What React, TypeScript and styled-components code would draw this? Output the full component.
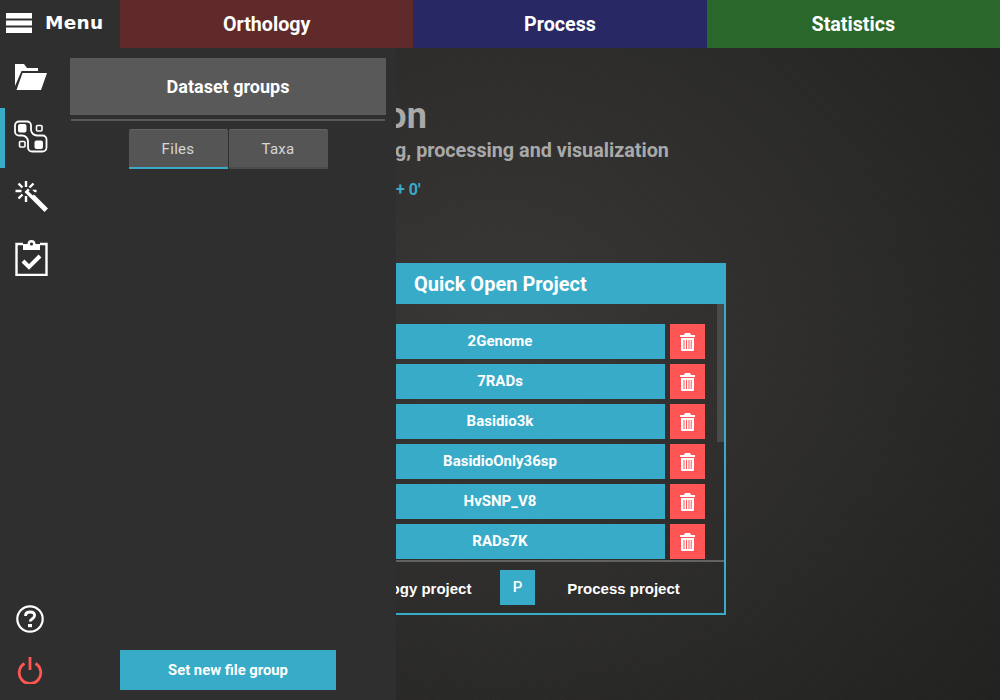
import React from "react";
import styled, { createGlobalStyle } from "styled-components";

const Global = createGlobalStyle`
  html, body { margin: 0; padding: 0; height: 100%; background: #262626; }
  #root { height: 100%; }
  * { box-sizing: border-box; }
`;

const Page = styled.div`
  width: 1000px;
  height: 700px;
  display: flex;
  flex-direction: column;
  overflow: hidden;
  font-family: Roboto, "Liberation Sans", sans-serif;
  color: #fff;
  background: #2f2f2f;
`;

const TopBar = styled.header`
  height: 48px;
  flex: none;
  display: flex;
`;

const MenuButton = styled.div`
  width: 120px;
  flex: none;
  display: flex;
  align-items: center;
  gap: 13px;
  padding: 0 0 3px 6px;
  font-family: "DejaVu Sans", sans-serif;
  font-weight: 700;
  font-size: 18.5px;
  letter-spacing: 0.3px;
`;

const TopTab = styled.div<{ $bg: string }>`
  flex: 1;
  display: flex;
  align-items: center;
  justify-content: center;
  padding: 1px 0 0 0;
  background: ${(p) => p.$bg};
  font-weight: 700;
  font-size: 19.7px;
`;

const Body = styled.div`
  flex: 1;
  display: flex;
  min-height: 0;
  position: relative;
`;

const Nav = styled.nav`
  width: 60px;
  flex: none;
  display: flex;
  flex-direction: column;
  background: #2f2f2f;
`;

const NavItem = styled.div<{ $active?: boolean; $lift?: number }>`
  height: 60px;
  display: flex;
  align-items: center;
  justify-content: center;
  padding: 0 0 ${(p) => p.$lift ?? 2}px 2px;
  box-shadow: ${(p) => (p.$active ? "inset 5px 0 0 #37abc8" : "none")};
`;

const NavSpacer = styled.div`
  flex: 1;
`;

const SmallNavItem = styled.div`
  height: 51px;
  display: flex;
  align-items: center;
  justify-content: center;
`;

const NavFoot = styled.div`
  padding-bottom: 5px;
`;

const Main = styled.main`
  flex: 1;
  min-width: 0;
  overflow: hidden;
  position: relative;
  padding: 50px 0 0 215px;
  background:
    repeating-linear-gradient(45deg, rgba(255, 255, 255, 0.012) 0 1px, transparent 1px 3px),
    radial-gradient(ellipse 640px 560px at 440px 280px, rgba(66, 64, 62, 0.72), rgba(60, 58, 57, 0) 100%),
    #212120;
`;

const Title = styled.h1`
  margin: 0;
  font-size: 36px;
  line-height: 36px;
  font-weight: 700;
  color: #a9a9a9;
  white-space: nowrap;
`;

const Subtitle = styled.p`
  margin: 4px 0 0 -246px;
  font-size: 19.75px;
  line-height: 26px;
  font-weight: 700;
  color: #a9a9a9;
  white-space: nowrap;
`;

const Version = styled.p`
  margin: 17px 0 0 35px;
  font-size: 16px;
  line-height: 18px;
  font-weight: 700;
  color: #37abc8;
  white-space: nowrap;
`;

const Card = styled.section`
  width: 451px;
  height: 352px;
  margin: 64px 0 0 0;
  border: 2px solid #37abc8;
  border-top: none;
  display: flex;
  flex-direction: column;
`;

const CardHeader = styled.div`
  height: 41px;
  flex: none;
  margin-right: -2px;
  background: #37abc8;
  display: flex;
  align-items: center;
  padding-left: 137px;
  font-size: 20px;
  font-weight: 700;
`;

const ListArea = styled.div`
  flex: 1;
  min-height: 0;
  overflow: hidden;
  position: relative;
  padding: 20px 0 0 58px;
  display: flex;
  flex-direction: column;
  gap: 5px;
`;

const ScrollThumb = styled.div`
  position: absolute;
  top: 0;
  right: 0;
  width: 7px;
  height: 138px;
  background: #4a4a4a;
`;

const ProjectRow = styled.div`
  display: flex;
  gap: 5px;
  flex: none;
`;

const ProjectButton = styled.div`
  width: 330px;
  height: 35px;
  padding-bottom: 1px;
  background: #37abc8;
  display: flex;
  align-items: center;
  justify-content: center;
  font-size: 15px;
  font-weight: 700;
`;

const TrashButton = styled.div`
  width: 35px;
  height: 35px;
  background: #ff5555;
  display: flex;
  align-items: center;
  justify-content: center;
`;

const CardFooter = styled.div`
  height: 53px;
  flex: none;
  border-top: 2px solid #626262;
  display: flex;
  align-items: center;
  padding-left: 8px;
`;

const SquareButton = styled.div`
  width: 35px;
  height: 35px;
  flex: none;
  background: #37abc8;
  display: flex;
  align-items: center;
  justify-content: center;
  padding-bottom: 1px;
  font-size: 15px;
  font-weight: 500;
`;

const FooterLabel = styled.div`
  width: 180px;
  flex: none;
  padding: 2px 3px 0 0;
  text-align: center;
  font-family: "Liberation Sans", sans-serif;
  font-size: 15px;
  font-weight: 700;
`;

const Panel = styled.aside`
  position: absolute;
  left: 60px;
  top: 0;
  bottom: 0;
  width: 336px;
  background: #2f2f2f;
  display: flex;
  flex-direction: column;
  padding: 10px;
`;

const PanelTitle = styled.div`
  height: 57px;
  flex: none;
  background: #595959;
  display: flex;
  align-items: center;
  justify-content: center;
  font-size: 18px;
  font-weight: 700;
`;

const Divider = styled.div`
  height: 2px;
  flex: none;
  margin: 4px 1px 0;
  background: #595959;
`;

const Tabs = styled.div`
  display: flex;
  justify-content: center;
  gap: 1px;
  margin: 8px 0 0 0;
  flex: none;
`;

const Tab = styled.div<{ $active?: boolean }>`
  width: 99px;
  height: 40px;
  display: flex;
  align-items: center;
  justify-content: center;
  padding-top: 1px;
  background: #555;
  border-top: 1px solid #626262;
  border-bottom: 2px solid ${(p) => (p.$active ? "#37abc8" : "#4b4b4b")};
  border-radius: 2px 2px 0 0;
  color: #d6d6d6;
  font-size: 15px;
  letter-spacing: 0.3px;
`;

const PanelSpacer = styled.div`
  flex: 1;
`;

const PanelAction = styled.div`
  width: 216px;
  height: 40px;
  flex: none;
  margin-left: 50px;
  background: #37abc8;
  display: flex;
  align-items: center;
  justify-content: center;
  font-size: 14.8px;
  font-weight: 700;
`;

const Hamburger = () => (
  <svg width="26" height="21" viewBox="0 0 26 21" fill="#fff">
    <rect x="0" y="1" width="26" height="5.5" />
    <rect x="0" y="8.5" width="26" height="5" />
    <rect x="0" y="15.5" width="26" height="5.5" />
  </svg>
);

const FolderIcon = () => (
  <svg width="34" height="28" viewBox="0 0 34 28" fill="#fff">
    <path d="M1 27V1h9l3 4h11v3H7.5L1 23z" />
    <path d="M8.5 10H33l-6 17H2.5z" />
  </svg>
);

const GroupsIcon = () => (
  <svg width="34" height="33" viewBox="0 0 34 33" fill="none" stroke="#fff">
    <path
      d="M5 1.5H13a4 4 0 0 1 4 4v4a6 6 0 0 0 6 6h5.5a4 4 0 0 1 4 4V27.5a4 4 0 0 1-4 4H18a4 4 0 0 1-4-4v-6a6 6 0 0 0-6-6H5a4 4 0 0 1-4-4V5.5a4 4 0 0 1 4-4z"
      strokeWidth="1.8"
    />
    <rect x="4" y="4" width="8.5" height="8.5" rx="2" fill="#fff" stroke="none" />
    <rect x="22.5" y="5.5" width="5.5" height="5.5" rx="1" strokeWidth="1.6" />
    <rect x="5.5" y="21.5" width="5.5" height="5.5" rx="1" strokeWidth="1.6" />
    <rect x="20.5" y="20.5" width="8.5" height="8.5" rx="2" fill="#fff" stroke="none" />
  </svg>
);

const WandIcon = () => (
  <svg width="34" height="34" viewBox="-1 0 34 34" fill="none" stroke="#fff" strokeWidth="2.4">
    <path d="M11 1v6M11 16v6M0.5 11h6M15.5 11h6M3.5 3.5l4 4M18.5 3.5l-4 4M3.5 18.5l4-4" />
    <path d="M13 8.5l20 20-3.5 3.5-20-20z" fill="#fff" stroke="none" />
    <path d="M13.6 11.4l2.6-2.6 4.2 4.2-2.6 2.6z" fill="#2f2f2f" stroke="none" />
  </svg>
);

const ChecklistIcon = () => (
  <svg width="33" height="37" viewBox="0 0 33 37" fill="none">
    <path d="M8 5H1.5v31h30V5H25" stroke="#fff" strokeWidth="2.4" />
    <path d="M8 11V5h4.5a4 4 0 0 1 8 0H25v6z" fill="#fff" />
    <circle cx="16.5" cy="5" r="1.6" fill="#2f2f2f" />
    <path d="M8 22l6 6 11-11" stroke="#fff" strokeWidth="4" />
  </svg>
);

const HelpIcon = () => (
  <svg width="28" height="28" viewBox="0 0 28 28" fill="none" stroke="#fff">
    <circle cx="14" cy="14" r="12.7" strokeWidth="2.2" />
    <path d="M9.5 11c0-2.6 2-4 4.6-4 2.7 0 4.5 1.4 4.5 3.6 0 3.2-4.4 3-4.4 6" strokeWidth="2.8" />
    <rect x="12" y="19" width="4" height="3.2" fill="#fff" stroke="none" />
  </svg>
);

const PowerIcon = () => (
  <svg width="26" height="28" viewBox="0 0 26 28" fill="none" stroke="#ff5555" strokeWidth="2.8">
    <path d="M7.5 7.5a10.8 10.8 0 1 0 11 0" />
    <path d="M13 1v13" />
  </svg>
);

const TrashIcon = () => (
  <svg width="15" height="18" viewBox="0 0 15 18" fill="#fff">
    <path d="M5 0h5l1 2h4v2H0V2h4z" />
    <path d="M1 5h13v12a1 1 0 0 1-1 1H2a1 1 0 0 1-1-1z" />
    <path d="M4 7v9M6.5 7v9M9 7v9M11.2 7v9" stroke="#ff5555" strokeWidth="1" />
  </svg>
);

const projects = ["2Genome", "7RADs", "Basidio3k", "BasidioOnly36sp", "HvSNP_V8", "RADs7K", "Salmon"];

export default function App() {
  return (
    <Page>
      <Global />
      <TopBar>
        <MenuButton>
          <Hamburger />
          Menu
        </MenuButton>
        <TopTab $bg="#602a2a">Orthology</TopTab>
        <TopTab $bg="#282865">Process</TopTab>
        <TopTab $bg="#2a672a">Statistics</TopTab>
      </TopBar>
      <Body>
        <Nav>
          <NavItem><FolderIcon /></NavItem>
          <NavItem $active $lift={4}><GroupsIcon /></NavItem>
          <NavItem><WandIcon /></NavItem>
          <NavItem><ChecklistIcon /></NavItem>
          <NavSpacer />
          <NavFoot>
            <SmallNavItem><HelpIcon /></SmallNavItem>
            <SmallNavItem><PowerIcon /></SmallNavItem>
          </NavFoot>
        </Nav>
        <Main>
          <Title>TriFusion</Title>
          <Subtitle>Streamlining phylogenomic data gathering, processing and visualization</Subtitle>
          <Version>Version 1.0 + 0'</Version>
          <Card>
            <CardHeader>Quick Open Project</CardHeader>
            <ListArea>
              <ScrollThumb />
              {projects.map((name) => (
                <ProjectRow key={name}>
                  <ProjectButton>{name}</ProjectButton>
                  <TrashButton><TrashIcon /></TrashButton>
                </ProjectRow>
              ))}
            </ListArea>
            <CardFooter>
              <SquareButton>O</SquareButton>
              <FooterLabel>Orthology project</FooterLabel>
              <SquareButton>P</SquareButton>
              <FooterLabel>Process project</FooterLabel>
            </CardFooter>
          </Card>
        </Main>
        <Panel>
          <PanelTitle>Dataset groups</PanelTitle>
          <Divider />
          <Tabs>
            <Tab $active>Files</Tab>
            <Tab>Taxa</Tab>
          </Tabs>
          <PanelSpacer />
          <PanelAction>Set new file group</PanelAction>
        </Panel>
      </Body>
    </Page>
  );
}
